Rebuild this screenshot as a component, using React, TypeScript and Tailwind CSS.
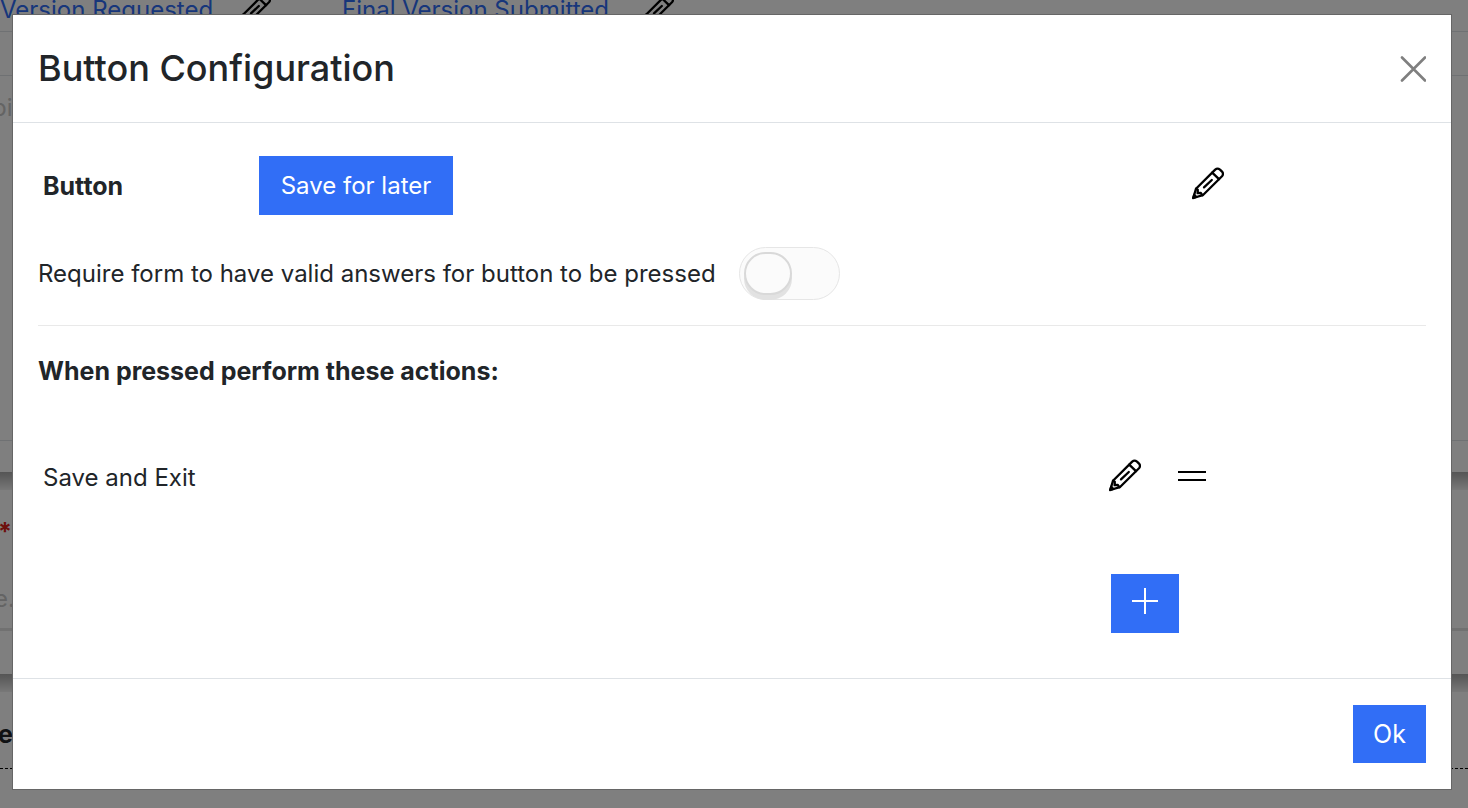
import React from 'react';

const PencilIcon = () => (
  <svg width="33" height="33" viewBox="0 0 33 33" fill="none" stroke="#000" strokeWidth="2.3" strokeLinejoin="round" strokeLinecap="round" className="shrink-0" aria-hidden="true">
    <path d="M2.2 31L5 21.8L24.2 2.6Q26.5 0.6 29 2.6L31 4.6Q33 7 31 9.2L11.8 28.2Z" />
    <path d="M21.2 5.6L28 12.2M5 21.8L6.8 22.8L6.6 26.2L9.6 25.8L11.4 28.2M13 20.4L20.8 13" />
    <path d="M2.2 31L3.2 27.8L5.4 30Z" fill="#000" />
  </svg>
);

const CardShadow = () => <div className="h-[18px] bg-linear-to-b from-[#aaa] to-[#f0f0f0]" />;

const BackgroundForm = () => {
  return (
    <div className="h-screen overflow-hidden bg-white" aria-hidden="true">
      {/* Status links */}
      <div className="flex h-8 items-start border-b border-[#dee2e6]">
        <div className="flex h-[19px] w-[342px] shrink-0 items-center gap-6">
          <a href="#" tabIndex={-1} className="w-[214px] whitespace-nowrap text-[#2f6df6]">Version Requested</a>
          <PencilIcon />
        </div>
        <div className="flex h-[19px] items-center gap-6">
          <a href="#" tabIndex={-1} className="w-[275px] whitespace-nowrap text-[#2f6df6]">Final Version Submitted</a>
          <PencilIcon />
        </div>
      </div>

      {/* Topic card */}
      <div className="h-[440px] pt-[43px]">
        <textarea tabIndex={-1} aria-label="Topic" placeholder="pic" className="-ml-2 block h-[366px] w-[calc(100%+8px)] resize-none border-y border-[#dee2e6] pt-[14px] placeholder:text-[#c8c8c8]" />
      </div>
      <CardShadow />

      {/* Required card */}
      <div className="h-[184px] pt-6">
        <div className="-ml-0.5 h-[66px] text-[25px] font-bold text-[#dc2018]">*</div>
        <input tabIndex={-1} aria-label="Required answer" placeholder="e." className="-ml-1.5 h-[51px] w-[calc(100%+6px)] border-b-[3px] border-[#e3e3e3] pb-3 placeholder:text-[#c8c8c8]" />
      </div>
      <CardShadow />

      <div className="h-[77px] border-b border-dashed border-black pt-6">
        <div className="-ml-0.5 text-[25px] font-bold">e</div>
      </div>
    </div>
  );
};

const App = () => {
  return (
    <div className="relative font-['Inter',sans-serif] text-[24px] leading-9 text-[#212529]">
      <BackgroundForm />

      {/* Modal */}
      <div className="fixed inset-0 bg-black/50 pb-[18px] pl-3 pr-4 pt-[14px]">
        <div role="dialog" aria-modal="true" aria-labelledby="modal-title" className="border border-[#666] bg-white">
          <header className="flex items-center justify-between border-b border-[#dee2e6] px-[25px] py-[29px]">
            <h1 id="modal-title" className="text-[36px] font-medium leading-[49px]">Button Configuration</h1>
            <button type="button" aria-label="Close">
              <svg width="26" height="26" viewBox="0 0 26 26" stroke="#7f7f7f" strokeWidth="2.6" strokeLinecap="round" aria-hidden="true">
                <path d="M2 1.5L25 24.5M25 1.5L2 24.5" />
              </svg>
            </button>
          </header>

          <main className="px-[25px] pb-[45px] pt-[33px]">
            <div className="flex items-center">
              <div className="w-[221px] pl-[5px] text-[25px] font-bold">Button</div>
              <div className="flex-1">
                <button type="button" className="h-[59px] w-[194px] bg-[#316ef6] text-white">Save for later</button>
              </div>
              <div className="w-[235px]">
                <button type="button" aria-label="Edit button" className="block pb-1"><PencilIcon /></button>
              </div>
            </div>

            <div className="mt-8 flex items-center border-b border-[#e9e9e9] pb-[25px]">
              <label htmlFor="require-valid" className="min-w-[701px]">Require form to have valid answers for button to be pressed</label>
              <input
                id="require-valid"
                type="checkbox"
                role="switch"
                className="h-[53px] w-[101px] appearance-none rounded-full border border-[#e6e6e6] bg-[#fbfbfb] p-1 before:block before:h-[43px] before:w-12 before:rounded-full before:border-2 before:border-[#d9d9d9] before:bg-[#fbfbfb] before:shadow-[0_5px_0_#e2e2e2] before:content-[''] checked:bg-[#316ef6] checked:before:ml-11"
              />
            </div>

            <h2 className="mt-[27px] text-[25px] font-bold">When pressed perform these actions:</h2>

            <div className="mt-[70px] flex items-center">
              <div className="flex-1 pl-[5px]">Save and Exit</div>
              <div className="flex w-[318px] items-center gap-[37px] pb-1">
                <button type="button" aria-label="Edit action"><PencilIcon /></button>
                <button type="button" aria-label="Reorder action">
                  <svg width="28" height="28" viewBox="0 0 28 28" stroke="#000" strokeWidth="2.2" aria-hidden="true">
                    <path d="M0 10H28M0 18H28" />
                  </svg>
                </button>
              </div>
            </div>

            <div className="mt-[78px] flex justify-end pr-[247px]">
              <button type="button" aria-label="Add action" className="flex h-[59px] w-[68px] justify-center bg-[#316ef6] pt-[14px]">
                <svg width="26" height="26" viewBox="0 0 26 26" stroke="#fff" strokeWidth="2" aria-hidden="true">
                  <path d="M13 0V26M0 13H26" />
                </svg>
              </button>
            </div>
          </main>

          <footer className="flex justify-end border-t border-[#dee2e6] px-[25px] py-[26px]">
            <button type="button" className="h-[58px] w-[73px] bg-[#316ef6] text-[25px] text-white">Ok</button>
          </footer>
        </div>
      </div>
    </div>
  );
};

export default App;
